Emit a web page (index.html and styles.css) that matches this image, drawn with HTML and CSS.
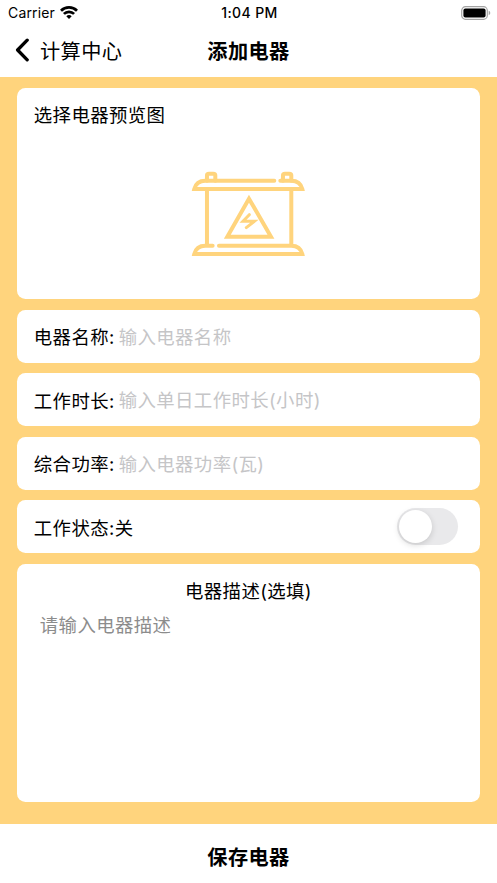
FILE: index.html
```html
<!DOCTYPE html>
<html lang="zh-CN">
<head>
    <meta charset="UTF-8">
    <meta name="viewport" content="width=device-width, initial-scale=1.0">
    <title>添加电器</title>
    <link rel="stylesheet" href="styles.css">
</head>
<body>
    <div class="app">
        <div class="status-bar">
            <div class="carrier">
                <span>Carrier</span>
                <svg class="wifi" viewBox="0 0 18 13" width="18" height="13">
                    <path d="M1 4.8a11.2 11.2 0 0 1 16 0M3.9 7.9a7.2 7.2 0 0 1 10.2 0" fill="none" stroke="#000" stroke-width="2.7"/>
                    <path d="M9 13 L6.3 10.3a3.9 3.9 0 0 1 5.4 0z"/>
                </svg>
            </div>
            <div class="time">1:04 PM</div>
            <svg class="battery" viewBox="0 0 30 14" width="30" height="14">
                <rect x="0.7" y="0.7" width="25.6" height="12.6" rx="3.8" fill="none" stroke="#a3a3a3" stroke-width="1.2"/>
                <rect x="2.4" y="2.4" width="22.2" height="9.2" rx="2"/>
                <path d="M27.7 4.8q1.6.6 1.6 2.2t-1.6 2.2z" fill="#a3a3a3"/>
            </svg>
        </div>

        <header class="nav">
            <a class="back" href="#">
                <svg viewBox="0 0 14 24" width="14" height="24">
                    <path d="M12.2 2.2 2.6 12l9.6 9.8" fill="none" stroke="#000" stroke-width="3.3" stroke-linecap="round" stroke-linejoin="round"/>
                </svg>
                <span>计算中心</span>
            </a>
            <h1>添加电器</h1>
        </header>

        <main class="content">
            <div class="card preview">
                <div class="label">选择电器预览图</div>
                <svg class="preview-icon" viewBox="30 30 348 264" width="116" height="88" fill="none" stroke="#ffd47d" stroke-width="12" stroke-linecap="round">
                    <path d="M282 62H75Q48 62 42 87H366Q360 62 333 62H300"/>
                    <path d="M80 62V46Q80 41 86 41H99Q105 41 105 46V62M308 62V46Q308 41 314 41H327Q333 41 333 46V62"/>
                    <path d="M80 90V252M333 90V252"/>
                    <path d="M97 257H75Q48 257 42 282H366Q360 257 333 257H116"/>
                    <path d="M206 116 141 230H272Z"/>
                    <path d="M207 164 188 184H222L198 203" stroke-width="9"/>
                </svg>
            </div>

            <label class="card field">
                <span>电器名称:</span>
                <input type="text" placeholder="输入电器名称">
            </label>

            <label class="card field">
                <span>工作时长:</span>
                <input type="text" placeholder="输入单日工作时长(小时)">
            </label>

            <label class="card field">
                <span>综合功率:</span>
                <input type="text" placeholder="输入电器功率(瓦)">
            </label>

            <div class="card field status">
                <span>工作状态:关</span>
                <button class="switch" type="button" aria-label="工作状态"></button>
            </div>

            <div class="card description">
                <div class="label">电器描述(选填)</div>
                <textarea placeholder="请输入电器描述"></textarea>
            </div>
        </main>

        <button class="save-btn" type="button">保存电器</button>
    </div>
</body>
</html>
```
FILE: styles.css
```css
* {
    margin: 0;
    padding: 0;
    box-sizing: border-box;
}

body {
    font-family: Inter, 'Noto Sans CJK SC', sans-serif;
    font-size: 18.4px;
    letter-spacing: 0.4px;
    color: #000;
    background: #fff;
}

.app {
    display: flex;
    flex-direction: column;
    height: 883px;
    overflow: hidden;
}

.status-bar {
    display: grid;
    grid-template-columns: 1fr auto 1fr;
    align-items: center;
    height: 25px;
    padding: 0 6px 0 8px;
    font-size: 14px;
    letter-spacing: 0.15px;
}

.carrier {
    display: flex;
    align-items: center;
    gap: 5px;
}

.time {
    font-weight: 500;
    letter-spacing: 0.4px;
}

.battery {
    justify-self: end;
}

.nav {
    display: grid;
    grid-template-columns: 1fr auto 1fr;
    align-items: center;
    height: 52px;
    padding: 0 15px 2px;
    font-size: 20.2px;
}

.back {
    display: flex;
    align-items: center;
    gap: 11px;
    color: inherit;
    text-decoration: none;
}

.nav h1 {
    font-size: inherit;
    font-weight: 700;
}

.content {
    flex: 1;
    display: flex;
    flex-direction: column;
    gap: 10.7px;
    padding: 10.7px 16.8px 21.8px;
    background: #ffd47d;
}

.card {
    background: #fff;
    border-radius: 8.5px;
}

.label {
    line-height: 26px;
}

.preview {
    height: 211.5px;
    padding: 14px 17px;
}

.preview-icon {
    display: block;
    margin: 42px auto 0;
    transform: translateX(-0.7px);
}

.field {
    display: flex;
    align-items: center;
    height: 52.8px;
    padding: 0 17px;
}

.field input {
    flex: 1;
    min-width: 0;
    margin-left: 4px;
    padding-top: 1px;
}

input,
textarea {
    border: none;
    outline: none;
    background: none;
    font: inherit;
    letter-spacing: inherit;
}

input::placeholder {
    color: #c5c5c7;
}

.status {
    justify-content: space-between;
    padding-right: 22px;
}

.switch {
    width: 61px;
    height: 37px;
    padding: 2px;
    border: none;
    border-radius: 19px;
    background: #e9e9eb;
}

.switch::before {
    content: '';
    display: block;
    width: 33px;
    height: 33px;
    border-radius: 50%;
    background: #fff;
    box-shadow: 0 2px 6px rgba(0, 0, 0, 0.15);
}

.description {
    flex: 1;
    display: flex;
    flex-direction: column;
    padding: 14px 17px;
}

.description .label {
    text-align: center;
}

.description textarea {
    flex: 1;
    margin-top: 8px;
    padding: 0 6px;
    line-height: 26px;
    resize: none;
}

textarea::placeholder {
    color: #8c8c8c;
}

.save-btn {
    height: 59px;
    padding-top: 5px;
    border: none;
    background: #fff;
    color: #000;
    font: inherit;
    font-size: 20.2px;
    font-weight: 700;
    letter-spacing: inherit;
}
```
